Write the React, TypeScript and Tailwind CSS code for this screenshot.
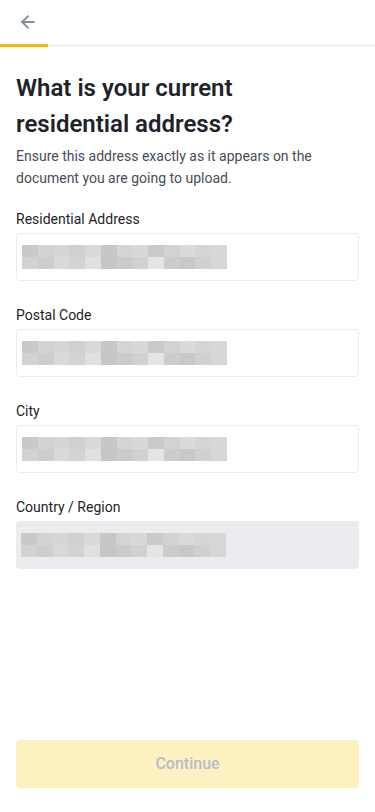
import { ArrowLeft } from "lucide-react";

// blurred value placeholder, drawn as pixel blocks
const topRow = ["#c9c9c9", "#d3d3d3", "#d6d6d6", "#d0d0d0", "#d9d9d9", "#c7c7c7", "#d4d4d4", "#d8d8d8", "#cacaca", "#d2d2d2", "#dadada", "#d5d5d5", "#d7d7d7"];
const bottomRow = ["#d2d2d2", "#cdcdcd", "#d9d9d9", "#d3d3d3", "#e0e0e0", "#c6c6c6", "#cbcbcb", "#d1d1d1", "#e4e4e4", "#cccccc", "#c8c8c8", "#d0d0d0", "#d6d6d6"];

const Blur = () => (
  <div className="flex flex-col w-[205px]">
    {[topRow, bottomRow].map((row, i) => (
      <div key={i} className="flex h-3">
        {row.map((c, j) => (
          <div key={j} className="flex-1" style={{ backgroundColor: c }} />
        ))}
      </div>
    ))}
  </div>
);

const Field = ({ label, disabled }: { label: string; disabled?: boolean }) => (
  <div className="mb-6">
    <div className="text-[14px] leading-[20px] text-[#1e2329] mb-1">{label}</div>
    <div
      className={
        "h-12 rounded-[4px] flex items-center px-[5px] " +
        (disabled ? "bg-[#eaecef]" : "bg-white border border-[#eaecef]")
      }
    >
      <Blur />
    </div>
  </div>
);

export default function App() {
  return (
    <div
      className="w-[375px] h-[812px] bg-white flex flex-col"
      style={{ fontFamily: "Roboto, 'Noto Sans', sans-serif" }}
    >
      <div className="h-11 flex items-center px-[18px]">
        <ArrowLeft size={20} strokeWidth={2.25} className="text-[#848e9c]" />
      </div>
      <div className="h-[3px] bg-[#f5f5f5] flex">
        <div className="w-12 bg-[#f0b90b]" />
      </div>

      <div className="px-4 flex-1 flex flex-col">
        <h1 className="mt-[23px] text-[24px] leading-[36px] font-semibold text-[#1e2329]">
          What is your current
          <br />
          residential address?
        </h1>
        <p className="mt-[3px] text-[14px] leading-[22px] text-[#474d57]">
          Ensure this address exactly as it appears on the document you are going to upload.
        </p>

        <div className="mt-5">
          <Field label="Residential Address" />
          <Field label="Postal Code" />
          <Field label="City" />
          <Field label="Country / Region" disabled />
        </div>

        <div className="mt-auto mb-6">
          <button className="w-full h-12 rounded-[4px] bg-[#fdf1c2] text-[#b7bdc6] text-[16px] font-medium">
            Continue
          </button>
        </div>
      </div>
    </div>
  );
}
